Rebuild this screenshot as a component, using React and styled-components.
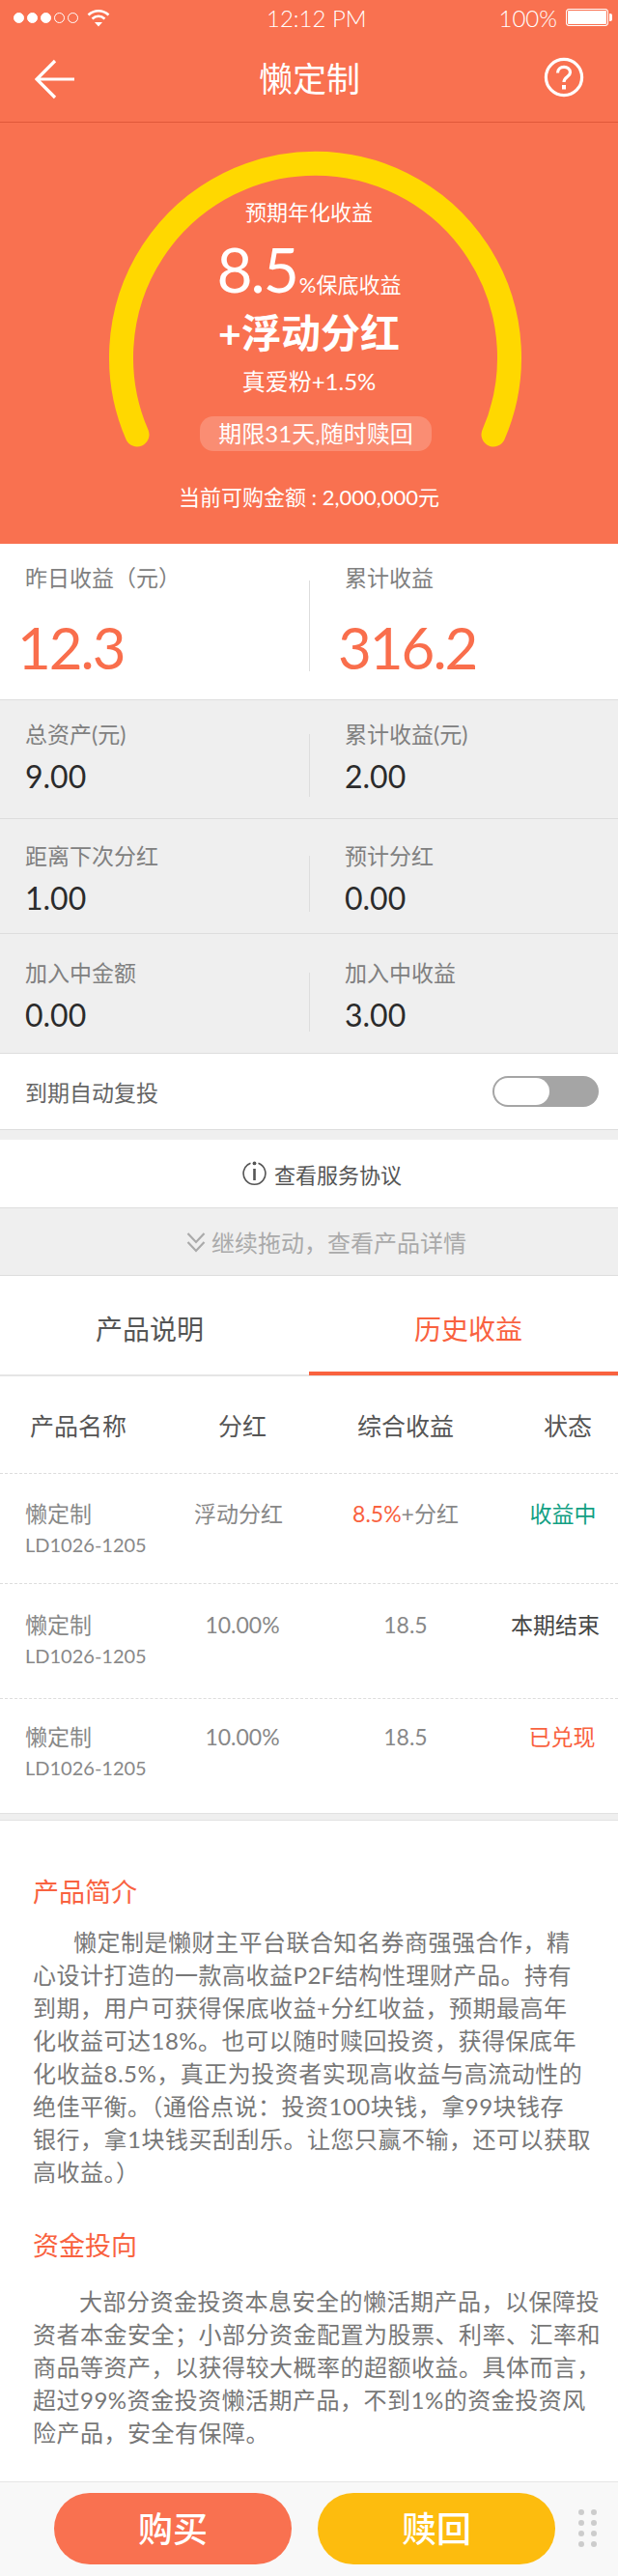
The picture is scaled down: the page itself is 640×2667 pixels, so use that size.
import React from 'react'
import styled, { createGlobalStyle } from 'styled-components';

const ORANGE = '#f97150';
const ACCENT = '#f9623f';
const FONT = 'Lato, "Noto Sans CJK SC", sans-serif';

const stats = [
  { height: 123, top: 20, cells: [{ label: '总资产(元)', value: '9.00' }, { label: '累计收益(元)', value: '2.00' }] },
  { height: 119, top: 23, cells: [{ label: '距离下次分红', value: '1.00' }, { label: '预计分红', value: '0.00' }] },
  { height: 124, top: 25, cells: [{ label: '加入中金额', value: '0.00' }, { label: '加入中收益', value: '3.00' }] },
];

const records = [
  { bonus: '浮动分红', bonusShift: 8, rate: <><Hot>8.5%</Hot>+分红</>, status: '收益中', color: '#12a083', pad: 18, height: 114, top: 25 },
  { bonus: '10.00%', rate: '18.5', status: '本期结束', color: '#444', pad: 2, height: 119, top: 26 },
  { bonus: '10.00%', rate: '18.5', status: '已兑现', color: ACCENT, pad: 16, height: 118, top: 23 },
];

const intro = [
  '懒定制是懒财主平台联合知名券商强强合作，精',
  '心设计打造的一款高收益P2F结构性理财产品。持有',
  '到期，用户可获得保底收益+分红收益，预期最高年',
  '化收益可达18%。也可以随时赎回投资，获得保底年',
  '化收益8.5%，真正为投资者实现高收益与高流动性的',
  '绝佳平衡。（通俗点说：投资100块钱，拿99块钱存',
  '银行，拿1块钱买刮刮乐。让您只赢不输，还可以获取',
  '高收益。）',
];

const funds = [
  '大部分资金投资本息安全的懒活期产品，以保障投',
  '资者本金安全；小部分资金配置为股票、利率、汇率和',
  '商品等资产，以获得较大概率的超额收益。具体而言，',
  '超过99%资金投资懒活期产品，不到1%的资金投资风',
  '险产品，安全有保障。',
];

function Hot({ children }) {
  return <span style={{ color: ACCENT }}>{children}</span>;
}

function StatusBar() {
  return (
    <Status>
      <Signal>
        {[1, 1, 1, 0, 0].map((on, i) => <SignalDot key={i} $on={on} />)}
      </Signal>
      <svg width="24" height="19" viewBox="0 0 24 19" fill="none" stroke="#fff" strokeWidth="2.6">
        <path d="M1.5 6.5 C7.5 .8 16.5 .8 22.5 6.5" />
        <path d="M5.5 10.5 C9.5 7 14.5 7 18.5 10.5" />
        <path d="M8 14 L16 14 L12 18.5 Z" fill="#fff" stroke="none" />
      </svg>
      <Clock>12:12 PM</Clock>
      <Percent>100%</Percent>
      <Battery />
    </Status>
  );
}

function Gauge() {
  return (
    <GaugeArc width="640" height="360" viewBox="0 0 640 360" fill="none">
      <path d="M142 323 A201 201 0 1 1 511 323" stroke="#ffd800" strokeWidth="25" strokeLinecap="round" />
    </GaugeArc>
  );
}

function App() {
  return (
    <Page>
      <GlobalStyle />
      <Top>
        <StatusBar />
        <Nav>
          <svg width="42" height="42" viewBox="0 0 42 42" fill="none" stroke="#fff" strokeWidth="3.2">
            <path d="M21 2 L2 21 L21 40 M2 21 L41 21" />
          </svg>
          <NavTitle>懒定制</NavTitle>
          <svg width="42" height="42" viewBox="0 0 42 42" fill="none" stroke="#fff" strokeWidth="3.2">
            <circle cx="21" cy="21" r="18.6" />
            <path d="M14.5 16.5 C14.5 8.5 27.5 8.5 27.5 16 C27.5 20.5 21 20.5 21 26" />
            <path d="M19 29 H23 V33.5 H19 Z" fill="#fff" stroke="none" />
          </svg>
        </Nav>
        <Hero>
          <Gauge />
          <HeroLabel>预期年化收益</HeroLabel>
          <RateRow>
            <Rate>8.5</Rate>
            <RateNote>%保底收益</RateNote>
          </RateRow>
          <Bonus>+浮动分红</Bonus>
          <Fans>真爱粉+1.5%</Fans>
          <Term>期限31天,随时赎回</Term>
          <Quota>当前可购金额 : 2,000,000元</Quota>
        </Hero>
      </Top>

      <Earnings>
        <EarningCell>
          <Label>昨日收益（元）</Label>
          <BigValue $shift={-8}>12.3</BigValue>
        </EarningCell>
        <EarningCell $divided>
          <Label>累计收益</Label>
          <BigValue $shift={-7}>316.2</BigValue>
        </EarningCell>
      </Earnings>

      {stats.map(row => (
        <StatRow key={row.height} $height={row.height} $top={row.top}>
          {row.cells.map((cell, j) => (
            <StatCell key={cell.label} $divided={j === 1}>
              <Label>{cell.label}</Label>
              <Value>{cell.value}</Value>
            </StatCell>
          ))}
        </StatRow>
      ))}

      <AutoRow>
        <span>到期自动复投</span>
        <Toggle><Knob /></Toggle>
      </AutoRow>

      <Agreement>
        <svg width="27" height="27" viewBox="0 0 27 27" fill="none" stroke="#555" strokeWidth="1.6">
          <path d="M9.5 3.2 A11.4 11.4 0 1 0 17.5 3.2" />
          <path d="M13.5 9 V21" strokeWidth="2.6" />
          <circle cx="13.5" cy="3.4" r="1.9" fill="#555" stroke="none" />
        </svg>
        查看服务协议
      </Agreement>

      <DragHint>
        <svg width="20" height="22" viewBox="0 0 20 22" fill="none" stroke="#aaa" strokeWidth="2.2">
          <path d="M1.5 2 L10 11 L18.5 2 M1.5 11 L10 20 L18.5 11" />
        </svg>
        继续拖动，查看产品详情
      </DragHint>

      <Tabs>
        <Tab>产品说明</Tab>
        <Tab $active>历史收益</Tab>
      </Tabs>

      <TableHead>
        <HeadCell $pad={31} $left>产品名称</HeadCell>
        <HeadCell>分红</HeadCell>
        <HeadCell>综合收益</HeadCell>
        <HeadCell $pad={28}>状态</HeadCell>
      </TableHead>

      {records.map((item, i) => (
        <Record key={i} $height={item.height} $top={item.top} $last={i === records.length - 1}>
          <div>
            懒定制
            <Code>LD1026-1205</Code>
          </div>
          <Cell $padRight={item.bonusShift}>{item.bonus}</Cell>
          <Cell>{item.rate}</Cell>
          <Cell $pad={item.pad} style={{ color: item.color }}>{item.status}</Cell>
        </Record>
      ))}

      <Strip />

      <Article>
        <Heading $gap={17}>产品简介</Heading>
        <Paragraph>
          {intro.map((line, i) => <Line key={i} $indent={i === 0 ? 42 : 0}>{line}</Line>)}
        </Paragraph>
        <Heading $top={41} $gap={23}>资金投向</Heading>
        <Paragraph>
          {funds.map((line, i) => <Line key={i} $indent={i === 0 ? 48 : 0}>{line}</Line>)}
        </Paragraph>
      </Article>

      <Footer>
        <ActionButton $color={ORANGE}>购买</ActionButton>
        <ActionButton $color="#fdbc0e">赎回</ActionButton>
        <Grip>
          {Array.from({ length: 8 }).map((_, i) => <i key={i} />)}
        </Grip>
      </Footer>
    </Page>
  );
}

const GlobalStyle = createGlobalStyle`
  body {
    margin: 0;
    background: #fff;
    font-family: ${FONT};
  }
`;

const Page = styled.div`
  width: 640px;
  height: 2667px;
  overflow: hidden;
  color: #888;
  background: #fff;
`;

const Top = styled.div`
  height: 563px;
  background: ${ORANGE};
  color: #fff;
`;

const Status = styled.div`
  position: relative;
  display: flex;
  align-items: center;
  height: 36px;
  padding: 0 10px 0 14px;
  margin-bottom: 4px;
`;

const Signal = styled.div`
  display: flex;
  gap: 3px;
  margin-right: 9px;
`;

const SignalDot = styled.span`
  width: 11px;
  height: 11px;
  box-sizing: border-box;
  border-radius: 50%;
  border: 1px solid #fff;
  background: ${props => (props.$on ? '#fff' : 'transparent')};
`;

const Clock = styled.span`
  position: absolute;
  left: 276px;
  font-size: 24px;
  font-weight: 300;
`;

const Percent = styled.span`
  margin-left: auto;
  margin-right: 9px;
  font-size: 24px;
  font-weight: 300;
`;

const Battery = styled.span`
  position: relative;
  width: 44px;
  height: 18px;
  box-sizing: border-box;
  border: 1px solid #fff;
  border-radius: 3px;
  background: #fff;
  box-shadow: inset 0 0 0 1px ${ORANGE};
  &::after {
    content: '';
    position: absolute;
    right: -5px;
    top: 4px;
    width: 3px;
    height: 8px;
    border-radius: 0 2px 2px 0;
    background: #fff;
  }
`;

const Nav = styled.div`
  display: flex;
  align-items: center;
  justify-content: space-between;
  height: 87px;
  padding: 0 35px 0 36px;
  box-sizing: border-box;
  border-bottom: 1px solid #e0583a;
  svg {
    margin-top: -6px;
  }
  svg:first-child {
    margin-top: -3px;
  }
`;

const NavTitle = styled.div`
  font-size: 35px;
  line-height: 40px;
  margin-top: -5px;
`;

const Hero = styled.div`
  position: relative;
  display: flex;
  flex-direction: column;
  align-items: center;
  padding-top: 78px;
`;

const GaugeArc = styled.svg`
  position: absolute;
  left: 0;
  top: 0;
`;

const HeroLabel = styled.div`
  position: relative;
  font-size: 22px;
  line-height: 30px;
`;

const RateRow = styled.div`
  position: relative;
  display: flex;
  align-items: baseline;
  height: 80px;
  line-height: 88px;
`;

const Rate = styled.span`
  font-size: 64px;
  letter-spacing: -2px;
`;

const RateNote = styled.span`
  font-size: 22px;
  margin-left: 2px;
`;

const Bonus = styled.div`
  position: relative;
  font-size: 41px;
  font-weight: 700;
  line-height: 60px;
`;

const Fans = styled.div`
  position: relative;
  font-size: 24px;
  line-height: 40px;
`;

const Term = styled.div`
  position: relative;
  width: 240px;
  height: 36px;
  margin: 16px 0 0 14px;
  border-radius: 14px;
  background: rgba(255, 255, 255, 0.2);
  font-size: 24px;
  line-height: 36px;
  text-align: center;
`;

const Quota = styled.div`
  font-size: 22px;
  line-height: 30px;
  margin-top: 33px;
`;

const Earnings = styled.div`
  display: grid;
  grid-template-columns: 320px 320px;
  height: 162px;
  box-sizing: border-box;
  padding-top: 20px;
  border-bottom: 1px solid #ddd;
`;

const Divided = styled.div`
  position: relative;
  padding-left: 26px;
  &::before {
    content: ${props => (props.$divided ? "''" : 'none')};
    position: absolute;
    left: 0;
    top: 15px;
    bottom: 22px;
    width: 1px;
    background: #ddd;
  }
`;

const EarningCell = styled(Divided)`
  padding-left: ${props => (props.$divided ? '37px' : '26px')};
  &::before {
    top: 18px;
    bottom: 29px;
  }
`;

const Label = styled.div`
  font-size: 23px;
  line-height: 30px;
  color: #808080;
`;

const BigValue = styled.div`
  margin: 22px 0 0 ${props => props.$shift}px;
  font-size: 60px;
  line-height: 70px;
  letter-spacing: -2px;
  color: #f96e4c;
`;

const StatRow = styled.div`
  height: ${props => props.$height}px;
  box-sizing: border-box;
  display: grid;
  grid-template-columns: 320px 320px;
  padding-top: ${props => props.$top}px;
  background: #efefef;
  border-bottom: 1px solid #ddd;
`;

const StatCell = styled(Divided)`
  padding-left: ${props => (props.$divided ? '37px' : '26px')};
`;

const Value = styled.div`
  margin-top: 8px;
  font-size: 32px;
  line-height: 42px;
  color: #2b2b2b;
`;

const AutoRow = styled.div`
  display: flex;
  align-items: center;
  justify-content: space-between;
  height: 79px;
  box-sizing: border-box;
  padding: 0 20px 0 26px;
  font-size: 23px;
  color: #666;
  border-bottom: 1px solid #ddd;
`;

const Toggle = styled.div`
  width: 110px;
  height: 32px;
  border-radius: 16px;
  background: #a5a5a5;
  padding: 2px;
  box-sizing: border-box;
`;

const Knob = styled.div`
  width: 57px;
  height: 28px;
  border-radius: 14px;
  background: #fff;
`;

const Agreement = styled.div`
  display: flex;
  align-items: center;
  justify-content: center;
  gap: 7px;
  height: 70px;
  border-top: 10px solid #efefef;
  box-sizing: content-box;
  padding-bottom: 0;
  padding-left: 26px;
  width: 614px;
  background: #fff;
  font-size: 22px;
  color: #555;
  svg {
    margin-top: -2px;
  }
`;

const DragHint = styled.div`
  display: flex;
  align-items: center;
  justify-content: center;
  gap: 6px;
  height: 71px;
  box-sizing: border-box;
  padding-left: 36px;
  background: #efefef;
  border-top: 1px solid #ddd;
  border-bottom: 1px solid #ddd;
  font-size: 24px;
  color: #aaa;
`;

const Tabs = styled.div`
  display: grid;
  grid-template-columns: 320px 320px;
  height: 104px;
  box-sizing: border-box;
  border-bottom: 2px solid #e5e5e5;
`;

const Tab = styled.div`
  display: flex;
  align-items: center;
  justify-content: center;
  height: 103px;
  box-sizing: border-box;
  padding: 8px ${props => (props.$active ? '0' : '10px')} 0 ${props => (props.$active ? '10px' : '0')};
  font-size: 28px;
  color: ${props => (props.$active ? ACCENT : '#555')};
  border-bottom: 4px solid ${props => (props.$active ? ACCENT : 'transparent')};
`;

const TableHead = styled.div`
  display: grid;
  grid-template-columns: 170px 162px 176px 132px;
  align-items: center;
  height: 101px;
  box-sizing: border-box;
  border-bottom: 1px dashed #ddd;
  font-size: 25px;
  color: #555;
`;

const HeadCell = styled.div`
  text-align: ${props => (props.$left ? 'left' : 'center')};
  padding-left: ${props => props.$pad || 0}px;
`;

const Record = styled.div`
  display: grid;
  grid-template-columns: 144px 162px 176px 132px;
  height: ${props => props.$height}px;
  box-sizing: border-box;
  padding: ${props => props.$top}px 0 0 26px;
  font-size: 23px;
  line-height: 32px;
  color: #888;
  border-bottom: ${props => (props.$last ? 'none' : '1px dashed #ddd')};
`;

const Cell = styled.div`
  text-align: center;
  white-space: nowrap;
  padding-left: ${props => props.$pad || 0}px;
  padding-right: ${props => props.$padRight || 0}px;
`;

const Code = styled.div`
  font-size: 20px;
  color: #888;
  white-space: nowrap;
`;

const Strip = styled.div`
  height: 8px;
  box-sizing: border-box;
  background: #efefef;
  border-top: 1px solid #e2e2e2;
  border-bottom: 1px solid #e2e2e2;
`;

const Article = styled.div`
  height: 684px;
  box-sizing: border-box;
  padding: 56px 0 0 34px;
`;

const Heading = styled.h3`
  margin: ${props => props.$top || 0}px 0 ${props => props.$gap}px;
  font-size: 27px;
  line-height: 36px;
  font-weight: 400;
  color: ${ACCENT};
`;

const Paragraph = styled.div`
  font-size: 24px;
  line-height: 34px;
  letter-spacing: 0.5px;
  color: #777;
`;

const Line = styled.div`
  white-space: nowrap;
  text-indent: ${props => props.$indent}px;
`;

const Footer = styled.div`
  position: relative;
  display: flex;
  align-items: center;
  gap: 27px;
  height: 99px;
  box-sizing: border-box;
  padding: 0 0 3px 56px;
  background: #f8f8f8;
  border-top: 1px solid #e5e5e5;
`;

const ActionButton = styled.div`
  width: 246px;
  height: 74px;
  border-radius: 37px;
  background: ${props => props.$color};
  color: #fff;
  font-size: 36px;
  font-weight: 500;
  line-height: 74px;
  text-align: center;
`;

const Grip = styled.div`
  display: grid;
  grid-template-columns: 6px 6px;
  column-gap: 7px;
  row-gap: 5px;
  margin-left: -3px;
  i {
    width: 6px;
    height: 6px;
    border-radius: 50%;
    background: #ccc;
  }
`;

export default App
